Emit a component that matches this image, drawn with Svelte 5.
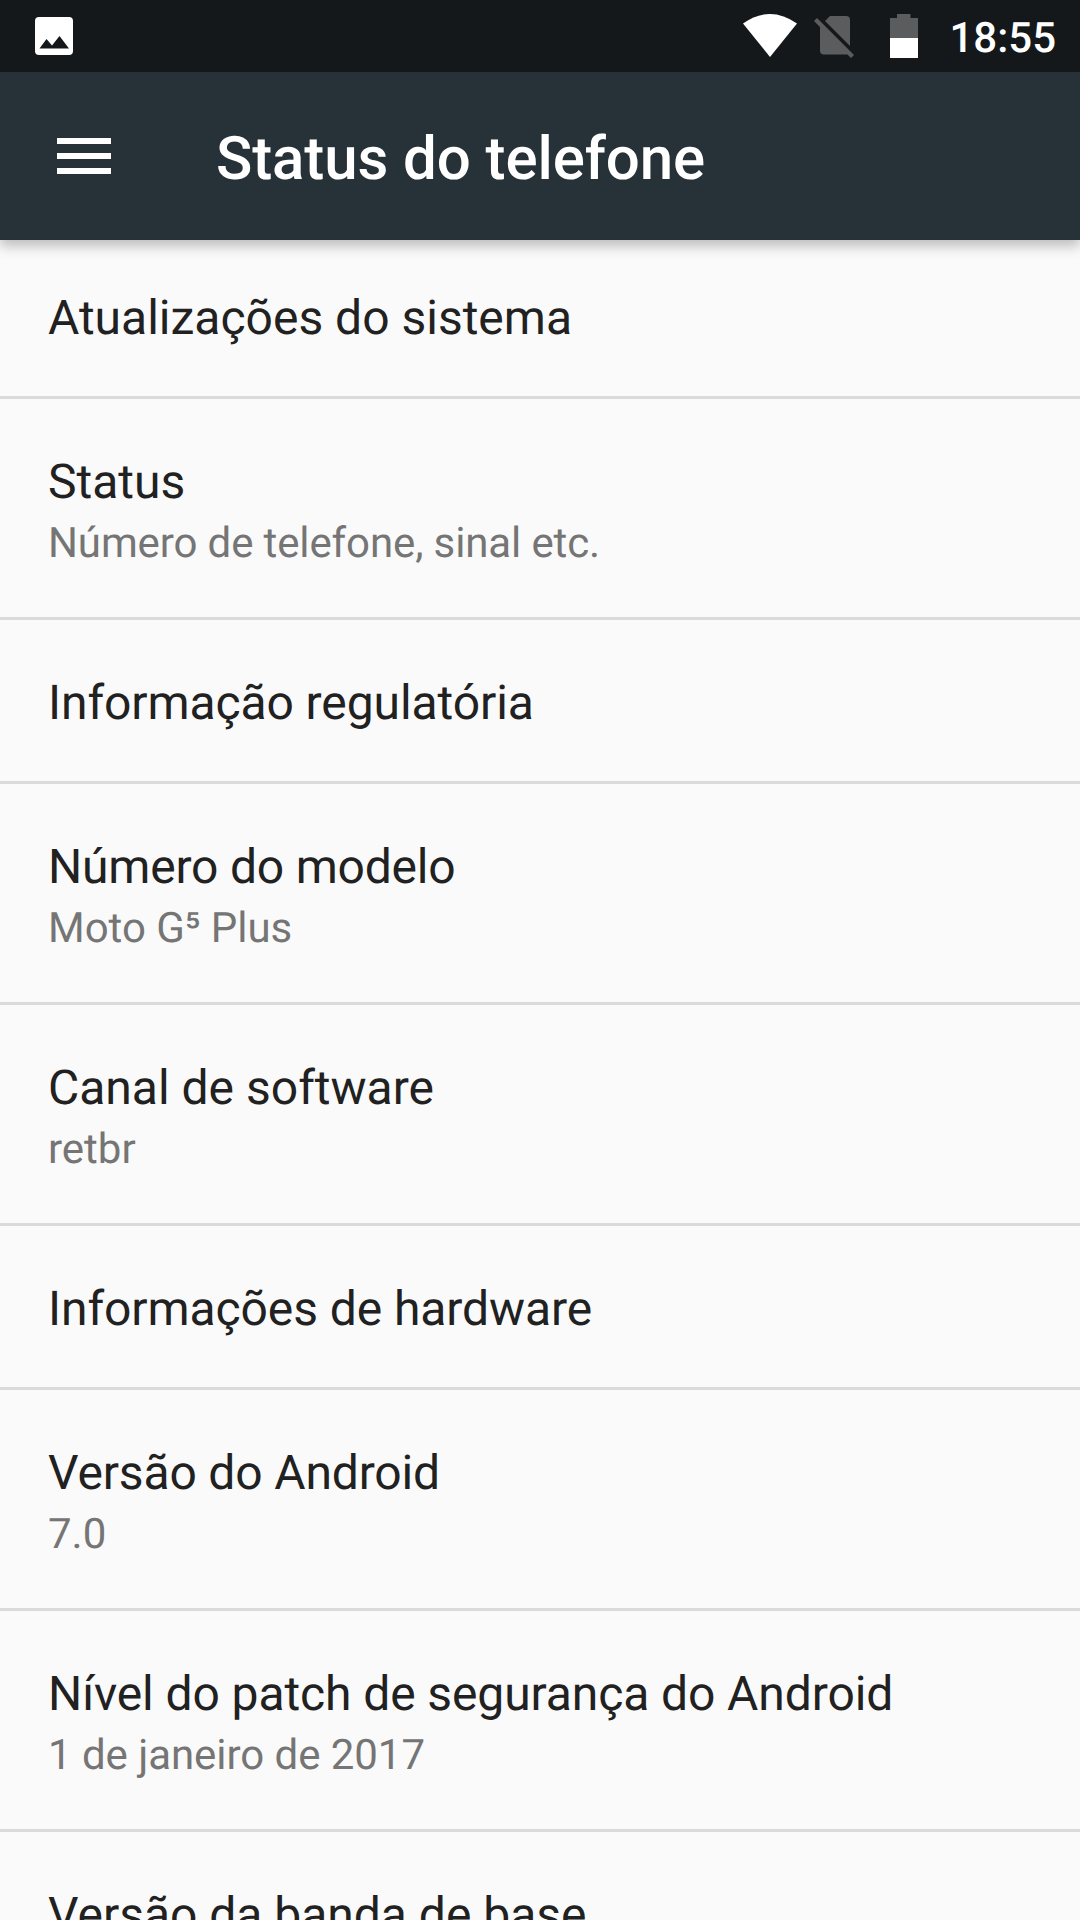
<script>
  // tracking values are letter spacing in pixels
  const items = [
    { title: 'Atualizações do sistema' },
    { title: 'Status', detail: 'Número de telefone, sinal etc.', detailTracking: -0.12 },
    { title: 'Informação regulatória', tracking: -0.09 },
    { title: 'Número do modelo', tracking: -0.2, detail: 'Moto G⁵ Plus' },
    { title: 'Canal de software', detail: 'retbr' },
    { title: 'Informações de hardware', tracking: -0.08 },
    { title: 'Versão do Android', tracking: -0.15, detail: '7.0' },
    { title: 'Nível do patch de segurança do Android', tracking: -0.1, detail: '1 de janeiro de 2017', detailTracking: -0.05 },
    { title: 'Versão da banda de base', tracking: -0.02 }
  ];
</script>

<div class="screen">
  <div class="statusbar">
    <svg class="picture" width="38" height="38" viewBox="0 0 38 38"><path fill="#fff" fill-rule="evenodd" d="M4 0H34Q38 0 38 4V34Q38 38 34 38H4Q0 38 0 34V4Q0 0 4 0ZM4.5 31.5H34L24.5 19L17 28.5L11.500 22Z"/></svg>
    <svg class="wifi" width="54" height="43" viewBox="0 0 54 43"><path fill="#fff" d="M0 9.5Q27-9.5 54 9.5L27 43Z"/></svg>
    <svg class="sim" width="40" height="44" viewBox="0 0 40 44"><path fill="#5b5c5e" d="M16 1H32Q36 1 36 5V31L11 6ZM0 6L3 3L40 40L37 43L33.5 39.5H10Q6 39.5 6 35.500V12Z"/></svg>
    <svg class="battery" width="28" height="44" viewBox="0 0 28 44"><path fill="#5b5c5e" d="M7 0H20.500V4H28V24H0V4H7Z"/><path fill="#fff" d="M0 24H28V44H0Z"/></svg>
    <span class="clock">18:55</span>
  </div>
  <header>
    <svg width="54" height="36" viewBox="0 0 54 36"><path fill="#fff" d="M0 0H54V6H0ZM0 15H54V21H0ZM0 30H54V36H0Z"/></svg>
    <h1>Status do telefone</h1>
  </header>
  <main>
    {#each items as item}
      <div class="item">
        <div class="title" style:letter-spacing="{item.tracking ?? 0}px">{item.title}</div>
        {#if item.detail}<div class="detail" style:letter-spacing="{item.detailTracking ?? 0}px">{item.detail}</div>{/if}
      </div>
    {/each}
  </main>
</div>

<style>
  .screen { width: 1080px; height: 1920px; overflow: hidden; background: #fafafa; font-family: Roboto, sans-serif; display: flex; flex-direction: column; text-rendering: geometricPrecision; }
  .statusbar { height: 72px; flex: none; background: #14181b; color: #fff; display: flex; align-items: flex-start; box-sizing: border-box; padding: 0 24px 0 35px; position: relative; z-index: 2; }
  .statusbar svg { flex: none; display: block; }
  .picture { margin-top: 17px; }
  .wifi { margin: 14px 0 0 auto; }
  .sim { margin: 15px 0 0 17px; }
  .battery { margin: 14px 0 0 36px; }
  .clock { font-size: 42px; font-weight: 500; line-height: 77px; margin-left: 31px; }
  header { height: 168px; flex: none; background: #263238; color: #fff; display: flex; align-items: center; padding-left: 57px; box-shadow: 0 6px 12px rgba(0, 0, 0, .25); position: relative; z-index: 1; }
  h1 { margin: 6px 0 0 105px; font-size: 60px; font-weight: 500; line-height: 70px; letter-spacing: -0.1px; }
  header svg { flex: none; }
  .item { box-sizing: border-box; padding: 54px 48px 49px; border-bottom: 3px solid #dadada; white-space: nowrap; }
  .item:first-child { padding-top: 49px; }
  .title { font-size: 48px; line-height: 58px; color: #212121; }
  .detail { font-size: 42px; line-height: 50px; padding-top: 8px; margin-bottom: -1px; color: #757575; }
</style>
